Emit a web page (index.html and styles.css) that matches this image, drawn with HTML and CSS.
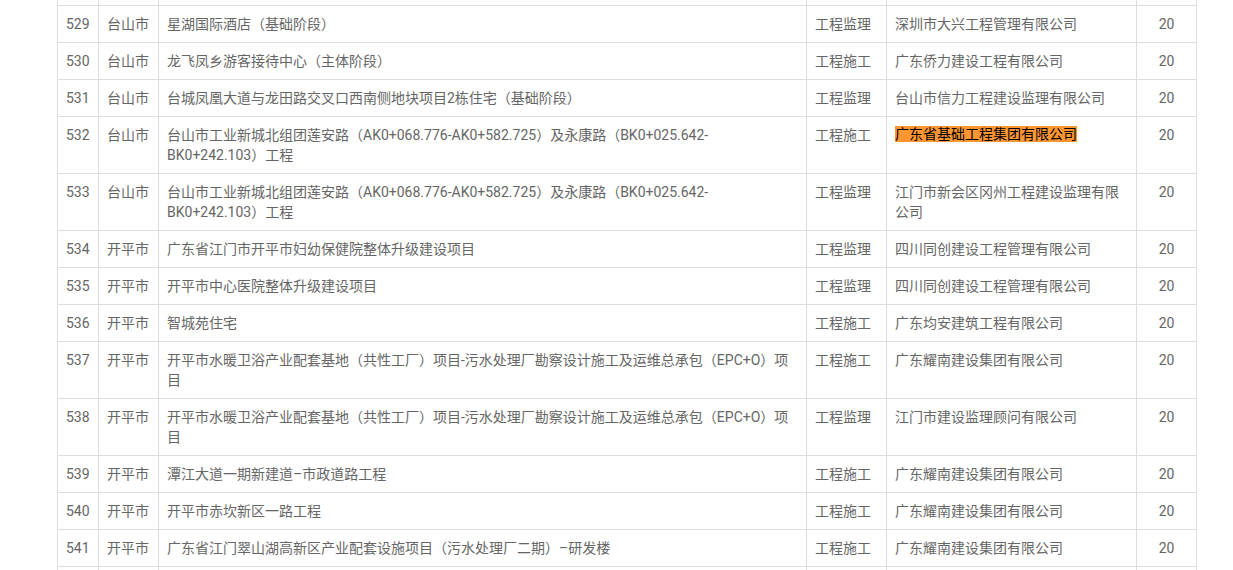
FILE: index.html
```html
<!DOCTYPE html>
<html lang="zh-CN">
<head>
<meta charset="utf-8">
<title>项目列表</title>
<link rel="stylesheet" href="styles.css">
</head>
<body>
<div class="wrap">
<table class="list">
<colgroup>
<col class="c-no"><col class="c-city"><col class="c-name"><col class="c-type"><col class="c-co"><col class="c-score">
</colgroup>
<tbody>
<tr class="stub stub-top"><td></td><td></td><td></td><td></td><td></td><td></td></tr>
<tr><td>529</td><td>台山市</td><td>星湖国际酒店（基础阶段）</td><td>工程监理</td><td>深圳市大兴工程管理有限公司</td><td class="num">20</td></tr>
<tr><td>530</td><td>台山市</td><td>龙飞凤乡游客接待中心（主体阶段）</td><td>工程施工</td><td>广东侨力建设工程有限公司</td><td class="num">20</td></tr>
<tr><td>531</td><td>台山市</td><td>台城凤凰大道与龙田路交叉口西南侧地块项目2栋住宅（基础阶段）</td><td>工程监理</td><td>台山市信力工程建设监理有限公司</td><td class="num">20</td></tr>
<tr><td>532</td><td>台山市</td><td>台山市工业新城北组团莲安路（AK0+068.776-AK0+582.725）及永康路（BK0+025.642-BK0+242.103）工程</td><td>工程施工</td><td><span class="hit">广东省基础工程集团有限公司</span></td><td class="num">20</td></tr>
<tr><td>533</td><td>台山市</td><td>台山市工业新城北组团莲安路（AK0+068.776-AK0+582.725）及永康路（BK0+025.642-BK0+242.103）工程</td><td>工程监理</td><td>江门市新会区冈州工程建设监理有限公司</td><td class="num">20</td></tr>
<tr><td>534</td><td>开平市</td><td>广东省江门市开平市妇幼保健院整体升级建设项目</td><td>工程监理</td><td>四川同创建设工程管理有限公司</td><td class="num">20</td></tr>
<tr><td>535</td><td>开平市</td><td>开平市中心医院整体升级建设项目</td><td>工程监理</td><td>四川同创建设工程管理有限公司</td><td class="num">20</td></tr>
<tr><td>536</td><td>开平市</td><td>智城苑住宅</td><td>工程施工</td><td>广东均安建筑工程有限公司</td><td class="num">20</td></tr>
<tr><td>537</td><td>开平市</td><td>开平市水暖卫浴产业配套基地（共性工厂）项目-污水处理厂勘察设计施工及运维总承包（EPC+O）项目</td><td>工程施工</td><td>广东耀南建设集团有限公司</td><td class="num">20</td></tr>
<tr><td>538</td><td>开平市</td><td>开平市水暖卫浴产业配套基地（共性工厂）项目-污水处理厂勘察设计施工及运维总承包（EPC+O）项目</td><td>工程监理</td><td>江门市建设监理顾问有限公司</td><td class="num">20</td></tr>
<tr><td>539</td><td>开平市</td><td>潭江大道一期新建道–市政道路工程</td><td>工程施工</td><td>广东耀南建设集团有限公司</td><td class="num">20</td></tr>
<tr><td>540</td><td>开平市</td><td>开平市赤坎新区一路工程</td><td>工程施工</td><td>广东耀南建设集团有限公司</td><td class="num">20</td></tr>
<tr><td>541</td><td>开平市</td><td>广东省江门翠山湖高新区产业配套设施项目（污水处理厂二期）–研发楼</td><td>工程施工</td><td>广东耀南建设集团有限公司</td><td class="num">20</td></tr>
<tr class="stub"><td></td><td></td><td></td><td></td><td></td><td></td></tr>
</tbody>
</table>
</div>
</body>
</html>
```
FILE: styles.css
```css
html, body {
  margin: 0;
  padding: 0;
  overflow: hidden;
  background: #fff;
}
.wrap {
  padding-left: 57px;
}
.list {
  border-collapse: collapse;
  table-layout: fixed;
  width: 1140px;
  font-family: Roboto, "Noto Sans CJK SC", sans-serif;
  font-size: 14px;
  line-height: 20px;
  color: #666;
}
.c-no { width: 41px; }
.c-city { width: 60px; }
.c-name { width: 648px; }
.c-type { width: 80px; }
.c-co { width: 250px; }
.c-score { width: 60px; }
.list td {
  border: 1px solid #ddd;
  padding: 8px 8px;
  vertical-align: top;
  text-align: left;
}
.list td.num {
  text-align: center;
}
.list tr.stub td {
  padding: 0;
  height: 10px;
}
.list tr.stub-top td {
  border-top: 0;
  height: 5px;
}
.hit {
  background: #ff9632;
  color: #000;
  display: inline-block;
  line-height: 16px;
  vertical-align: 1px;
}
```
